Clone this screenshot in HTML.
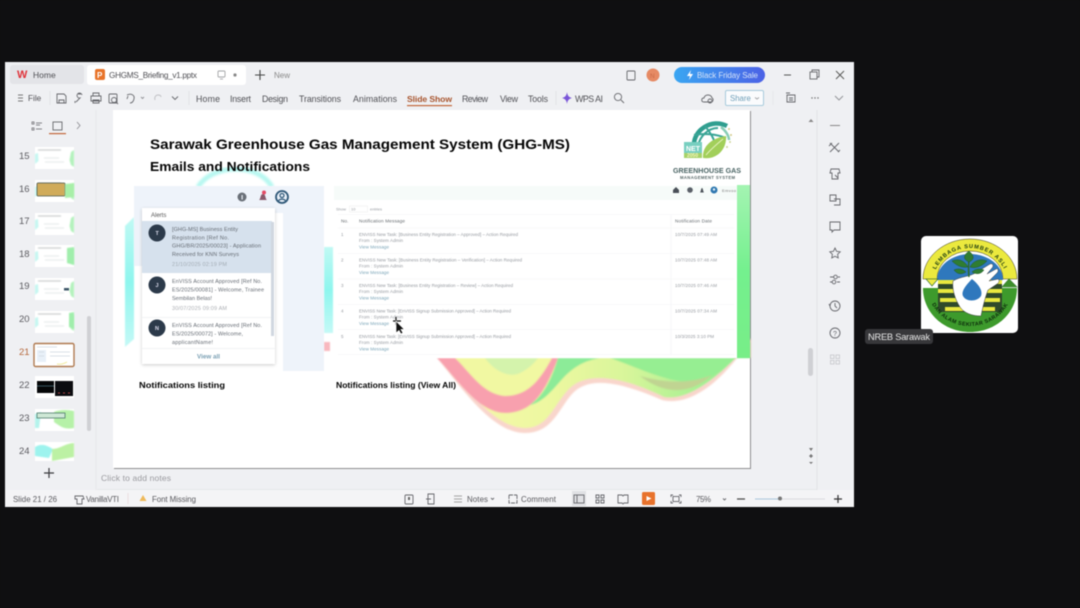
<!DOCTYPE html>
<html><head><meta charset="utf-8"><title>GHGMS Briefing</title>
<style>
html,body{margin:0;padding:0;background:#0f0f11;width:1080px;height:608px;overflow:hidden}
svg{display:block;filter:blur(.42px)}
text{font-family:"Liberation Sans",sans-serif}
.ui{font-size:8.8px;fill:#505055}
.st{font-size:7.9px;fill:#5a5a5f}
.tn{font-size:9.5px;fill:#5a5a5f}
.ic{fill:none;stroke:#66676c;stroke-width:.9}
.a{font-size:5.5px;fill:#666c74}
.t{font-size:4.5px;fill:#969aa0}
.v{font-size:4.5px;fill:#7ba5b8}
.h{font-size:4.7px;fill:#666b70}
.b{font-weight:bold;fill:#050505}
</style></head><body>
<svg width="1080" height="608" viewBox="0 0 1080 608" xmlns="http://www.w3.org/2000/svg">
<defs>
<linearGradient id="pill" x1="0" x2="1"><stop offset="0" stop-color="#3aa6f2"/><stop offset="1" stop-color="#4c62e6"/></linearGradient>
<linearGradient id="wg" x1="0" x2="1" y1="0" y2="0"><stop offset="0" stop-color="#f8f7ac"/><stop offset=".35" stop-color="#edf8a0"/><stop offset=".6" stop-color="#d8f59a"/><stop offset="1" stop-color="#86ee8e"/></linearGradient>
<linearGradient id="cy" x1="0" x2="0" y1="0" y2="1"><stop offset="0" stop-color="#c0f9f4"/><stop offset=".5" stop-color="#8ef6ee"/><stop offset="1" stop-color="#c4f9f6"/></linearGradient>
<linearGradient id="gb" x1="0" x2="0" y1="0" y2="1"><stop offset="0" stop-color="#a4f4b2"/><stop offset=".5" stop-color="#74f08e"/><stop offset="1" stop-color="#78ee88"/></linearGradient>
<filter id="bl"><feGaussianBlur stdDeviation="1"/></filter>
<filter id="bl2"><feGaussianBlur stdDeviation=".7"/></filter>
<filter id="bl3"><feGaussianBlur stdDeviation=".55"/></filter>
<filter id="sh" x="-10%" y="-10%" width="120%" height="120%"><feDropShadow dx="0" dy="1" stdDeviation="1.5" flood-color="#000" flood-opacity=".2"/></filter>
<g id="th">
<rect x="0" y="0" width="39" height="22" fill="#fff"/>
<g filter="url(#bl3)">
<path d="M0 7 L3 6 L3.500 14 L0 17Z" fill="#c6f7f1"/>
<path d="M39 3 L36 5 L34.500 13 L36 18 L39 20Z" fill="#b4f2bd"/>
<path d="M3 3H26" stroke="#aab0b0" stroke-width=".8"/>
<path d="M9 11H24M10 15H29" stroke="#dce2e2" stroke-width=".8"/>
</g>
</g>
</defs>

<rect width="1080" height="608" fill="#0f0f11"/>
<!-- window -->
<rect x="5" y="62" width="849" height="445" fill="#eff0f3"/>
<!-- tab bar -->
<rect x="10" y="65" width="74" height="19" rx="3" fill="#e3e4e8"/>
<text x="17" y="78" font-size="11" font-weight="bold" fill="#e0333a">W</text>
<text x="33" y="78" class="ui" style="font-size:8.500px">Home</text>
<rect x="87" y="65" width="159" height="20" rx="3" fill="#fff"/>
<rect x="95" y="69" width="10" height="11" rx="2" fill="#e8742a"/>
<text x="97" y="78" font-size="8" fill="#fff" font-weight="bold">P</text>
<text x="109" y="78" class="ui" style="font-size:8.200px" textLength="88">GHGMS_Briefing_v1.pptx</text>
<rect x="218" y="71" width="7" height="6" rx="1" class="ic" stroke-opacity=".6"/>
<path d="M220 79h3" class="ic" stroke-opacity=".6"/>
<circle cx="235" cy="75" r="1.600" fill="#888"/>
<path d="M260 70v10M255 75h10" stroke="#444" stroke-width="1.100"/>
<text x="274" y="78" font-size="8" fill="#888">New</text>
<rect x="627" y="71" width="8" height="9" rx="1" class="ic" stroke-width="1.300"/>
<circle cx="653" cy="75" r="6.500" fill="#e68a64"/>
<text x="650" y="78" font-size="6.500" fill="#c96a48">N</text>
<rect x="674" y="67" width="91" height="16" rx="8" fill="url(#pill)"/>
<path d="M691 70l-4 6h3l-1 4 4-6h-3z" fill="#fff"/>
<text x="697" y="78" font-size="8" fill="#d4e2f8" textLength="61">Black Friday Sale</text>
<path d="M784 75h7" stroke="#555" stroke-width="1"/>
<rect x="810" y="72" width="7" height="7" class="ic"/><path d="M812 72v-2h7v7h-2" class="ic"/>
<path d="M836 71l8 8M844 71l-8 8" stroke="#555" stroke-width=".9"/>

<!-- toolbar -->
<path d="M18 95h5M18 98h5M18 101h5" stroke="#777" stroke-width=".9"/>
<text x="28" y="101" class="ui" style="font-size:8.200px">File</text>
<path d="M50 91v14" stroke="#e2e3e6"/>
<path d="M57 94h7l2 2v7h-9zM59 103v-3h5v3" class="ic"/>
<path d="M76 102l4-4a2.500 2.500 0 1 1 2 -3 M75 103v-2M78 94h3" class="ic"/>
<path d="M93 96v-3h6v3M91 96h10v5h-10zM93 100h6v3h-6z" class="ic"/>
<rect x="109" y="94" width="8" height="9" rx="1" class="ic"/><circle cx="114" cy="100" r="2.500" class="ic"/><path d="M116 102l2 2" class="ic"/>
<path d="M128 96l-1 3M127 95c4-2 8 0 7 4s-3 4-4 4" class="ic"/>
<path d="M141 97l1.500 1.500 1.500-1.500" class="ic" stroke-opacity=".7"/>
<path d="M155 100c-1-3 1-5 3-5s3 1 3 2" class="ic" stroke-opacity=".35"/>
<path d="M172 96.500l3 3 3-3" class="ic"/>
<path d="M189 91v14" stroke="#e2e3e6"/>
<g class="ui">
<text x="196" y="102" textLength="24">Home</text>
<text x="230" y="102" textLength="21">Insert</text>
<text x="262" y="102" textLength="26">Design</text>
<text x="299" y="102" textLength="42">Transitions</text>
<text x="353" y="102" textLength="44">Animations</text>
<text x="462" y="102" textLength="26">Review</text>
<text x="500" y="102" textLength="18">View</text>
<text x="528" y="102" textLength="20">Tools</text>
</g>
<text x="407" y="102" font-size="8.600" font-weight="bold" fill="#a8552e" textLength="45">Slide Show</text>
<rect x="407" y="105" width="45" height="1.200" fill="#c2673a"/>
<path d="M556 91v14" stroke="#e2e3e6"/>
<path d="M567 92c.5 3.500 1.500 5 5 6-3.500 1-4.500 2.500-5 6-.5-3.500-1.500-5-5-6 3.500-1 4.500-2.500 5-6z" fill="#7a55d8"/>
<text x="575" y="102" class="ui" textLength="28">WPS AI</text>
<circle cx="618" cy="97" r="3.600" class="ic"/><path d="M621 100l3 3" class="ic"/>
<path d="M704 102c-3 0-3-4 0-4 1-4 7-4 8 0 2 1 1 4-1 4z" class="ic"/>
<circle cx="710" cy="101" r="2" class="ic"/>
<rect x="725.500" y="90.500" width="38" height="15" rx="1.500" fill="#fafbfd" stroke="#a8cbdc"/>
<text x="730" y="101" font-size="7.800" fill="#6f9fb8">Share</text>
<path d="M755 97.500l2 1.500 2-1.500" class="ic" stroke-opacity=".6"/>
<path d="M773 91v14" stroke="#e6e7ea"/>
<path d="M787 95h8v7h-8zM786 93h4M789 98h4M789 100h4" class="ic"/>
<circle cx="812" cy="98" r=".7" fill="#666"/><circle cx="815" cy="98" r=".7" fill="#666"/><circle cx="818" cy="98" r=".7" fill="#666"/>
<path d="M835 96l4 4 4-4" class="ic" stroke-opacity=".7"/>

<!-- left pane -->
<path d="M96 110v380" stroke="#e6e7ea"/>
<path d="M32 122h2v2h-2zM32 128h2v2h-2zM36 123h6M36 125h4M36 129h6" class="ic" stroke-width=".7" stroke-opacity=".8"/>
<rect x="53" y="122" width="9" height="8" class="ic"/>
<rect x="49" y="133" width="17" height="1.200" fill="#c2673a"/>
<path d="M77 122l3 3.500-3 3.500" class="ic" stroke-opacity=".7"/>
<g class="tn">
<text x="19" y="159">15</text><text x="19" y="192">16</text><text x="19" y="224">17</text><text x="19" y="257">18</text><text x="19" y="289">19</text><text x="19" y="322">20</text><text x="19" y="355" style="fill:#b5683c">21</text><text x="19" y="388">22</text><text x="19" y="421">23</text><text x="19" y="454">24</text>
</g>
<use href="#th" x="35" y="147"/>
<use href="#th" x="35" y="180"/>
<rect x="37" y="183" width="28" height="13" rx="1" fill="#d0ab5a" stroke="#4d5a4f" stroke-width=".8"/>
<path d="M65 184l9-1v14l-9 1z" fill="#a8efa8" filter="url(#bl3)"/>
<use href="#th" x="35" y="213"/>
<use href="#th" x="35" y="245"/>
<path d="M67 248l7-1v18l-7-2z" fill="#a0eeac" filter="url(#bl3)"/>
<use href="#th" x="35" y="278"/>
<rect x="64" y="288" width="5" height="2.500" fill="#3d5668"/>
<use href="#th" x="35" y="311"/>
<path d="M69 313l5-1v17l-5-2z" fill="#a0eeac" filter="url(#bl3)"/>
<rect x="34" y="343.500" width="40" height="23" rx="1.500" fill="#fff" stroke="#b07a50" stroke-width="1.400"/>
<rect x="37" y="350" width="9" height="12" fill="#e8f0f8"/>
<path d="M37 347h20M39 352h5M39 356h5M50 352h20M50 356h20" stroke="#d0d8de" stroke-width=".7"/>
<path d="M57 364c5 1 8-1 10-2" stroke="#f2ec9e" fill="none"/>
<rect x="35" y="376" width="39" height="22" fill="#fff"/>
<rect x="37" y="381" width="17" height="12" fill="#050608"/>
<rect x="55" y="381" width="18" height="15" fill="#0b0c10"/>
<path d="M37 386h17" stroke="#36555f" stroke-width="1"/>
<path d="M58 393h2M63 393h2M68 393h2" stroke="#b34444" stroke-width="1"/>
<rect x="35" y="409" width="39" height="22" fill="#fff"/>
<g filter="url(#bl3)">
<path d="M35 414l6-2-2 16h-4z" fill="#b4f3ec"/>
<path d="M54 412c6-3 16-2 20-1v17c-10 2-14-2-20-6z" fill="#b6f1a8"/>
</g>
<rect x="37" y="413" width="28" height="5" fill="#cfe8d6" stroke="#4f7a6c" stroke-width=".8"/>
<rect x="35" y="442" width="39" height="19" fill="#fff"/>
<g filter="url(#bl3)">
<path d="M35 447c8-5 14 0 18 2l-4 9-14-2z" fill="#9df3ee"/>
<path d="M52 449c8 0 14-6 22-6v14l-22 4z" fill="#bcf1a4"/>
</g>
<rect x="87" y="316" width="4" height="115" rx="2" fill="#cfd0d4"/>
<path d="M49 468v10M44 473h10" stroke="#3a3a3e" stroke-width="1.200"/>

<!-- slide area -->
<rect x="114" y="111" width="637" height="358" fill="#8e8e90"/>
<rect x="113" y="110" width="637" height="358" fill="#fff"/>
<!-- blobs -->
<path d="M198 187C212 164 258 162 272 187" fill="none" stroke="#b8f8f1" stroke-width="5" filter="url(#bl)"/>
<g filter="url(#bl3)">
<path d="M125 226l9-9v122l-9 8z" fill="url(#cy)"/>
<path d="M324 247h9v86h-9z" fill="url(#cy)"/>
<path d="M324 342h6v9h-6z" fill="#f8b8bf"/>
</g>
<!-- waves -->
<g filter="url(#bl2)">
<path d="M437 358C462 388 492 433 525 433C552 433 558 410 572 394C590 374 625 384 662 400C695 408 730 372 751 338V358Z" fill="#f9d6cc"/>
<path d="M441 358C465 386 494 428 525 428C548 428 553 406 568 390C588 368 630 380 664 397C692 402 728 368 750 342V358Z" fill="url(#wg)"/>
<path d="M437 358C455 376 478 413 505 413C532 413 545 393 558 358Z" fill="#f8a0ae"/>
<path d="M455 358C470 372 482 394 505 396C528 396 540 380 552 358Z" fill="#f1f8a2"/>
<path d="M485 358C495 372 510 378 520 373C530 368 535 362 538 358Z" fill="#d4f3ac"/>
<path d="M558 358C553 375 545 395 530 405C545 402 556 385 566 375C580 362 590 360 600 358Z" fill="#8ceb98"/>
<path d="M610 358C635 366 670 385 700 382C720 375 735 355 750 342V358Z" fill="#96ee92"/>
<path d="M640 376C665 395 690 395 712 375C690 384 665 383 640 376Z" fill="#c0d492"/>
</g>
<rect x="737" y="185" width="13" height="173" fill="url(#gb)"/>

<!-- title -->
<text x="150" y="149" class="b" font-size="14" textLength="420" lengthAdjust="spacingAndGlyphs">Sarawak Greenhouse Gas Management System (GHG-MS)</text>
<text x="150" y="171" class="b" font-size="12.500" textLength="160" lengthAdjust="spacingAndGlyphs">Emails and Notifications</text>

<!-- logo -->
<path d="M694 146C693 130 712 118 727 126" fill="none" stroke="#2f9e8f" stroke-width="4.500"/>
<path d="M698 146C700 136 708 128 718 128M705 126C710 132 714 138 716 146M694 135C704 133 716 134 726 138" fill="none" stroke="#3aa596" stroke-width="2"/>
<path d="M721 127C726 131 729 136 729 140" fill="none" stroke="#88cdb6" stroke-width="2.500"/>
<rect x="684" y="142" width="18" height="16" fill="#78cfc0"/>
<rect x="684" y="153" width="18" height="5" fill="#a6d268"/>
<text x="686" y="151" font-size="7" fill="#fff" font-weight="bold">NET</text>
<text x="687" y="157" font-size="5" fill="#f4f4c0" font-weight="bold">2050</text>
<path d="M703 158C702 146 712 138 726 136C727 148 718 160 703 158Z" fill="#a2cf5a"/>
<path d="M706 155C711 149 717 144 723 139" stroke="#e4f2bd" stroke-width="1" fill="none"/>
<circle cx="729" cy="129" r="1" fill="#d2c98a"/><circle cx="731" cy="135" r="1" fill="#d2c98a"/><circle cx="730" cy="142" r="1" fill="#cfd79a"/><circle cx="727" cy="147" r="1" fill="#cfd79a"/>
<text x="673" y="173" font-size="7" font-weight="bold" fill="#4a6464" textLength="68" lengthAdjust="spacingAndGlyphs">GREENHOUSE GAS</text>
<text x="680" y="179" font-size="4.200" font-weight="bold" fill="#566666" textLength="55">MANAGEMENT SYSTEM</text>

<!-- left panel -->
<rect x="134" y="186" width="190" height="80" fill="#eef3fa"/>
<rect x="283" y="266" width="41" height="105" fill="#eef3fa"/>
<rect x="275" y="213" width="8" height="54" fill="#fff"/>
<circle cx="242" cy="197" r="4.500" fill="#6a7078"/><rect x="241.500" y="195" width="1.200" height="4.500" fill="#e8eef5"/>
<path d="M259 200c2-1 1-6 4-6s2 5 4 6z" fill="#8a5a6c"/>
<circle cx="264" cy="192.500" r="2" fill="#e64b66"/>
<circle cx="282" cy="197" r="6" fill="#e9f0f8" stroke="#2f5878" stroke-width="1.800"/>
<circle cx="282" cy="195.500" r="2" fill="none" stroke="#2f5878" stroke-width="1.200"/>
<path d="M278.500 201c1-2.500 6-2.500 7 0" fill="none" stroke="#2f5878" stroke-width="1.200"/>

<g>
<rect x="142" y="208" width="133" height="156" fill="#fff" filter="url(#sh)"/>
<rect x="142" y="221" width="130" height="52" fill="#d6e1ed"/>
<text x="151" y="217" class="a" style="font-size:6px;fill:#555">Alerts</text>
<circle cx="157" cy="233" r="8.500" fill="#2c3a4a"/><text x="155.500" y="235" font-size="5.500" fill="#dde" font-weight="bold">T</text>
<circle cx="157" cy="285" r="8.500" fill="#2c3a4a"/><text x="155.500" y="287" font-size="5.500" fill="#dde" font-weight="bold">J</text>
<circle cx="157" cy="328" r="8.500" fill="#2c3a4a"/><text x="155" y="330" font-size="5.500" fill="#dde" font-weight="bold">N</text>
<text x="172" y="231" class="a" textLength="66">[GHG-MS] Business Entity</text>
<text x="172" y="239.500" class="a" textLength="57">Registration [Ref No.</text>
<text x="172" y="247.500" class="a" textLength="89">GHG/BR/2025/00023] - Application</text>
<text x="172" y="256" class="a" textLength="67">Received for KNN Surveys</text>
<text x="172" y="266" class="a" style="fill:#a4adb6" textLength="55">21/10/2025 02:19 PM</text>
<text x="172" y="283" class="a" textLength="90">EnVISS Account Approved [Ref No.</text>
<text x="172" y="291.500" class="a" textLength="92">ES/2025/00081] - Welcome, Trainee</text>
<text x="172" y="300" class="a" textLength="40">Sembilan Belas!</text>
<text x="172" y="310" class="a" style="fill:#aeb1b6" textLength="55">30/07/2025 09:09 AM</text>
<text x="172" y="327" class="a" textLength="90">EnVISS Account Approved [Ref No.</text>
<text x="172" y="335.500" class="a" textLength="71">ES/2025/00072] - Welcome,</text>
<text x="172" y="344" class="a" textLength="41">applicantName!</text>
<path d="M142 317.500h130M142 348.500h133" stroke="#eeeff1" stroke-width=".7"/>
<rect x="271" y="222" width="3" height="114" fill="#d0d7e0"/>
<text x="197" y="358.500" font-size="6.300" font-weight="bold" fill="#7ba0b4" textLength="23">View all</text>
</g>
<text x="139" y="388" class="b" font-size="8" textLength="86" lengthAdjust="spacingAndGlyphs">Notifications listing</text>
<text x="336" y="388" class="b" font-size="8" textLength="120" lengthAdjust="spacingAndGlyphs">Notifications listing (View All)</text>

<!-- right table -->
<rect x="334" y="186" width="403" height="172" fill="#fff"/>
<rect x="334" y="186" width="403" height="14" fill="#f6fbf9"/>
<path d="M673 190l3-3 3 3v3h-6z" fill="#4a5058"/>
<circle cx="690" cy="190" r="2.800" fill="#5a6068"/>
<path d="M700 192.500c1-1 1-4.500 2-4.500s1 3.500 2 4.500z" fill="#4a5058"/>
<circle cx="714" cy="190" r="3.500" fill="#2f78b0"/><circle cx="714" cy="189.500" r="1.200" fill="#e8f2fa"/>
<text x="722" y="192" font-size="4" fill="#777" textLength="14">Emvoo</text>
<text x="336" y="210.500" class="t" style="font-size:4px" textLength="10">Show</text>
<rect x="349.500" y="206" width="18" height="6" fill="#fff" stroke="#ececec" stroke-width=".5"/>
<text x="351" y="210.500" class="t" style="font-size:4px">10</text>
<text x="370" y="210.500" class="t" style="font-size:4px" textLength="12">entries</text>
<path d="M338 214.500h396M338 228h396M338 253.500h396M338 279h396M338 304.500h396M338 329.500h396M338 354.500h396" stroke="#f3f4f5" stroke-width=".6"/>
<path d="M671 215v140" stroke="#f0f2f3" stroke-width=".6"/>
<text x="341" y="222.700" class="h">No.</text>
<text x="359" y="222.700" class="h" textLength="46">Notification Message</text>
<text x="675" y="222.700" class="h" textLength="37">Notification Date</text>

<g>
<text x="341" y="236" class="t">1</text>
<text x="359" y="236" class="t" textLength="159">ENVISS New Task: [Business Entity Registration – Approved] – Action Required</text>
<text x="359" y="242.200" class="t" textLength="44">From : System Admin</text>
<text x="359" y="248.500" class="v" textLength="30">View Message</text>
<text x="675" y="236" class="t" textLength="42">10/7/2025 07:49 AM</text>
<text x="341" y="261.500" class="t">2</text>
<text x="359" y="261.500" class="t" textLength="163">ENVISS New Task: [Business Entity Registration – Verification] – Action Required</text>
<text x="359" y="267.700" class="t" textLength="44">From : System Admin</text>
<text x="359" y="274" class="v" textLength="30">View Message</text>
<text x="675" y="261.500" class="t" textLength="42">10/7/2025 07:48 AM</text>
<text x="341" y="287" class="t">3</text>
<text x="359" y="287" class="t" textLength="154">ENVISS New Task: [Business Entity Registration – Review] – Action Required</text>
<text x="359" y="293.200" class="t" textLength="44">From : System Admin</text>
<text x="359" y="299.500" class="v" textLength="30">View Message</text>
<text x="675" y="287" class="t" textLength="42">10/7/2025 07:46 AM</text>
<text x="341" y="312.500" class="t">4</text>
<text x="359" y="312.500" class="t" textLength="152">ENVISS New Task: [EnVISS Signup Submission Approved] – Action Required</text>
<text x="359" y="318.700" class="t" textLength="44">From : System Admin</text>
<text x="359" y="325" class="v" textLength="30">View Message</text>
<text x="675" y="312.500" class="t" textLength="42">10/7/2025 07:34 AM</text>
<text x="341" y="338" class="t">5</text>
<text x="359" y="338" class="t" textLength="152">ENVISS New Task: [EnVISS Signup Submission Approved] – Action Required</text>
<text x="359" y="344.200" class="t" textLength="44">From : System Admin</text>
<text x="359" y="350.500" class="v" textLength="30">View Message</text>
<text x="675" y="338" class="t" textLength="39">10/3/2025 3:10 PM</text>
</g>

<!-- cursor -->
<path d="M396 317v8M393 321h8" stroke="#111" stroke-width="1.200"/>
<path d="M396 321v12l3-2.500 2 3.500 2-1-2-3.500h3.500z" fill="#111" stroke="#fff" stroke-width=".7"/>

<!-- notes + dividers -->
<text x="101" y="481" font-size="8.500" fill="#9a9a9f" textLength="70">Click to add notes</text>
<rect x="97" y="489" width="720" height="1" fill="#e6e7ea"/>
<path d="M817 110v380" stroke="#e2e3e6"/>
<path d="M808 118l-2.500 3h5z" transform="translate(3,1)" fill="#888"/>
<rect x="808" y="348" width="5" height="28" rx="2.500" fill="#cfd0d4"/>
<path d="M809 448l2 3 2-3zM809 456l2-2 2 2-2 2zM809 462l2 2 2-2z" fill="#777"/>

<!-- right sidebar -->
<path d="M830 125.500h10" stroke="#888" stroke-width="1"/>
<path d="M830 143l9 9M839 143l-9 9M829 146l3-3M838 152l2-2" class="ic" stroke-width="1.300"/>
<path d="M831 169h8l1 4h-2v6h-6v-6h-2z M835 175l3 3" class="ic"/>
<path d="M830 195h6v6h-6zM834 199h6v6h-6" class="ic"/>
<path d="M830 222h10v8h-6l-2 2v-2h-2z" class="ic"/>
<path d="M835 248l1.600 3.300 3.600.5-2.600 2.500.6 3.600-3.200-1.700-3.200 1.700.6-3.600-2.600-2.500 3.600-.5z" class="ic"/>
<path d="M830 277h4M838 277h2M830 282h2M837 282h3" class="ic"/><circle cx="835.500" cy="277" r="1.800" class="ic"/><circle cx="834" cy="282" r="1.800" class="ic"/>
<circle cx="835" cy="306" r="5" class="ic"/><path d="M835 303v3l2 2M829 304l1 2" class="ic"/>
<circle cx="835" cy="333" r="5" class="ic"/><text x="833" y="336" font-size="7" fill="#66676c">?</text>
<g fill="none" stroke="#cdced2"><rect x="830.500" y="355" width="3.500" height="3.500"/><rect x="836" y="355" width="3.500" height="3.500"/><rect x="830.500" y="360.500" width="3.500" height="3.500"/><rect x="836" y="360.500" width="3.500" height="3.500"/></g>

<!-- status bar -->
<rect x="5" y="490" width="849" height="17" fill="#f4f4f6"/>
<text x="13" y="502" class="st" textLength="44">Slide 21 / 26</text>
<path d="M75 496h8l1 3h-2v5h-5v-5h-2z" class="ic"/>
<text x="86" y="502" class="st" textLength="33">VanillaVTI</text>
<path d="M128 493v11" stroke="#ecdfdf"/>
<path d="M143 495l3.500 6h-7z" fill="#eeb95a"/>
<text x="152" y="502" class="st" textLength="44">Font Missing</text>
<rect x="405" y="495" width="8" height="9" rx="1" class="ic"/><path d="M408 497h2v3h-2z" fill="#666"/>
<path d="M428 494h6v10h-6zM426 499h5" class="ic"/>
<path d="M454 496h8M454 499h8M454 502h8" stroke="#888" stroke-width=".8"/>
<text x="467" y="502" class="st" textLength="21">Notes</text>
<path d="M491 498l1.500 1.500 1.500-1.500" class="ic"/>
<path d="M509 495h8M509 495v8h8v-8" class="ic" stroke-dasharray="4 1"/>
<text x="521" y="502" class="st" textLength="35">Comment</text>
<rect x="572" y="491" width="14" height="15" fill="#e0e1e4"/>
<rect x="574" y="495" width="10" height="8" class="ic"/><path d="M577 495v8" class="ic"/>
<path d="M596 495h3v3h-3zM601 495h3v3h-3zM596 500h3v3h-3zM601 500h3v3h-3z" class="ic"/>
<path d="M618 495h4l1 1 1-1h4v8h-4l-1 1-1-1h-4z" class="ic"/>
<rect x="642" y="492" width="13" height="13" rx="1.500" fill="#e8722c"/>
<path d="M646.500 496l5 2.500-5 2.500z" fill="#fff"/>
<path d="M671 497v-2h2M679 495h2v2M681 501v2h-2M673 503h-2v-2" class="ic"/><rect x="673" y="496.500" width="6" height="5" class="ic"/>
<text x="696" y="502" class="st" textLength="15">75%</text>
<path d="M723 498.500l1.500 1.500 1.500-1.500" class="ic"/>
<path d="M737 499h8" stroke="#444" stroke-width="1.200"/>
<path d="M755 499h25" stroke="#a8c6da" stroke-width="1"/>
<path d="M780 499h45" stroke="#d8dade" stroke-width="1"/>
<circle cx="780" cy="498.500" r="2" fill="#777"/>
<path d="M838 495v8M834 499h8" stroke="#333" stroke-width="1.200"/>

<!-- NREB tile -->
<rect x="921" y="236" width="97" height="97" rx="5" fill="#fff"/>
<defs>
<path id="arcT" d="M932 286A38 38 0 0 1 1008 286"/>
<path id="arcB" d="M928 288A42 38 0 0 0 1012 288"/>
</defs>
<!-- yellow arch -->
<path d="M923 279A47 40 0 0 1 1017 279H1003A33 28 0 0 0 937 279Z" fill="#ebe93e" stroke="#3a3a20" stroke-width=".5"/>
<!-- blue -->
<path d="M937 280A33 26 0 0 1 1003 280Z" fill="#2f78bd"/>
<!-- green lower -->
<path d="M923 288H1017C1017 313 996 332 970 332C944 332 923 313 923 288Z" fill="#3d9a2c"/>
<path d="M926 279h12l-6 7zM1002 287l7-8 8 8z" fill="#eeea44" stroke="#2a6a2a" stroke-width=".6"/>
<path d="M1002 287l7-8 8 8z" fill="#3d8f2c"/>
<!-- stripes -->
<g>
<path d="M938 280h64v35h-64z" fill="#2f4a2a"/>
<path d="M938 280h64v4h-64zM938 289h64v4h-64zM940 298h60v4h-60zM945 307h50v4h-50z" fill="#e9e83e"/>
</g>
<path d="M938 316C945 322 995 322 1002 316L1002 310 1000 312H940L938 310Z" fill="#3d9a2c"/>
<!-- hand -->
<path d="M953 281C961 276 970 277 977 272L990 264C993 263 994 266 992 268L987 274L996 269C998 268 999 271 997 273L989 281L998 279C1000 280 999 283 997 284L988 290C985 298 983 306 981 316C972 316 964 313 960 307C955 299 952 290 953 281Z" fill="#fff" stroke="#3a3a3a" stroke-width=".5"/>
<path d="M972 279C965 286 961 292 963 296C966 302 977 302 981 296C983 290 978 284 972 279Z" fill="#2f78bd"/>
<!-- plant -->
<path d="M969 277C968 268 969 262 969 256" stroke="#2e6a2c" stroke-width="1.500" fill="none"/>
<path d="M969 262C964 260 962 256 969 251C975 256 974 260 969 262ZM968 267C962 268 957 266 952 261C959 258 965 261 968 267ZM970 267C976 269 982 266 987 261C980 258 973 261 970 267ZM966 272C961 275 957 274 954 270C958 268 963 269 966 272ZM972 272C977 275 981 274 984 270C980 268 975 269 972 272Z" fill="#2f7d32" stroke="#1c4d20" stroke-width=".4"/>
<text font-size="5.600" font-weight="bold" fill="#1a3a10" text-anchor="middle" letter-spacing=".9"><textPath href="#arcT" startOffset="50%">LEMBAGA SUMBER ASLI</textPath></text>
<text font-size="5.400" font-weight="bold" fill="#0c2a0c" text-anchor="middle" letter-spacing=".4"><textPath href="#arcB" startOffset="50%">DAN ALAM SEKITAR SARAWAK</textPath></text>

<!-- name label -->
<rect x="865" y="329" width="68" height="15" rx="3" fill="#37373a"/>
<text x="868" y="340" font-size="9.300" fill="#e6e6e6" textLength="62">NREB Sarawak</text>
</svg>
</body></html>
